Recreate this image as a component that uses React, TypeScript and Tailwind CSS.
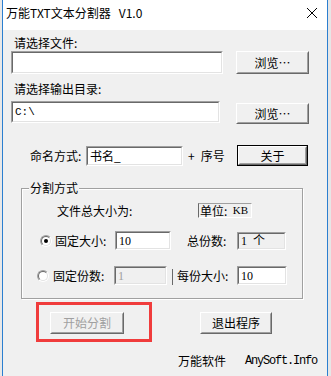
const CJK = "font-['Noto_Sans_CJK_SC','Noto_Sans',sans-serif]"

function Sunken({ className = '', inner = 'bg-white', children }: { className?: string; inner?: string; children?: React.ReactNode }) {
  return (
    <div className={`border border-t-[#a0a0a0] border-l-[#a0a0a0] border-b-white border-r-white ${className}`}>
      <div className={`h-full border border-t-[#696969] border-l-[#696969] border-b-[#e3e3e3] border-r-[#e3e3e3] flex items-center pl-[2px] ${inner}`}>
        {children}
      </div>
    </div>
  )
}

function Button({ className = '', disabled = false, children }: { className?: string; disabled?: boolean; children: React.ReactNode }) {
  return (
    <div className={`border border-t-white border-l-white border-b-[#696969] border-r-[#696969] ${className}`}>
      <div
        className={`h-full flex items-center justify-center border border-t-[#f0f0f0] border-l-[#f0f0f0] border-b-[#a0a0a0] border-r-[#a0a0a0] bg-[#f0f0f0] text-[12px] ${CJK} ${
          disabled ? 'text-[#a0a0a0]' : 'text-black'
        }`}
      >
        {children}
      </div>
    </div>
  )
}

function Radio({ checked, className = '' }: { checked?: boolean; className?: string }) {
  return (
    <div className={`w-[12px] h-[12px] rounded-full border border-t-[#a0a0a0] border-l-[#a0a0a0] border-b-white border-r-white ${className}`}>
      <div className="w-full h-full rounded-full bg-white border border-[#e3e3e3] border-t-[#696969] border-l-[#696969] flex items-center justify-center">
        {checked && <div className="w-[4px] h-[4px] rounded-full bg-black" />}
      </div>
    </div>
  )
}

export default function App() {
  return (
    <div className="w-[331px] h-[376px] flex bg-[#e6e6e6] overflow-hidden">
      <div className="w-[2px] bg-[#e8e8e8]" />
      <div className="w-px bg-[#2b7fd0]" />

      {/* window */}
      <div className={`w-[324px] bg-[#f0f0f0] text-[12px] text-black ${CJK}`}>
        <div className="h-[30px] bg-white flex items-start justify-between">
          <span className="mt-[5px] ml-[3px] leading-[16px] text-[12px]">万能TXT文本分割器&nbsp;&nbsp;&nbsp;V1.0</span>
          <svg width="12" height="12" viewBox="0 0 12 12" className="mt-[7px] mr-[9px]">
            <path d="M1 1 L11 11 M11 1 L1 11" stroke="#000" strokeWidth="1" />
          </svg>
        </div>

        <div className="mt-[6px] ml-[11px] h-[14px] leading-[14px]">请选择文件:</div>
        <div className="mt-[1px] flex">
          <Sunken className="ml-[8px] w-[212px] h-[23px]" />
          <Button className="ml-[13px] w-[73px] h-[23px]">浏览…</Button>
        </div>

        <div className="mt-[8px] ml-[11px] h-[14px] leading-[14px]">请选择输出目录:</div>
        <div className="mt-[5px] flex items-start">
          <Sunken className="ml-[8px] w-[209px] h-[22px]">
            <span className="font-['Liberation_Mono',monospace] text-[11px] leading-none">C:\</span>
          </Sunken>
          <Button className="ml-[16px] mt-[2px] w-[73px] h-[21px]">浏览…</Button>
        </div>

        <div className="mt-[21px] flex items-center">
          <span className="ml-[27px] w-[56px] leading-[14px]">命名方式:</span>
          <Sunken className="w-[97px] h-[20px]">
            <span className="leading-none">书名_</span>
          </Sunken>
          <span className="ml-[5px] w-[49px] leading-[14px]">
            <span className="mr-[6px]">+</span>序号
          </span>
          <div className="border border-black">
            <Button className="w-[69px] h-[19px]">关于</Button>
          </div>
        </div>

        {/* group box */}
        <div className="relative mt-[22px] ml-[18px] w-[282px] h-[111px] border border-[#a0a0a0] shadow-[inset_1px_1px_0_#fff,1px_1px_0_#fff]">
          <span className="absolute top-[-8px] left-[7px] px-[1px] bg-[#f0f0f0] leading-[14px]">分割方式</span>

          <div className="mt-[14px] flex items-center">
            <span className="ml-[35px] w-[141px] leading-[14px]">文件总大小为:</span>
            <div className="w-[54px] h-[15px] border border-t-[#a0a0a0] border-l-[#696969] border-b-white border-r-white flex items-center pl-px leading-[13px]">
              单位:&nbsp;&nbsp;<span className="font-['Liberation_Serif',serif] text-[11px]">KB</span>
            </div>
          </div>

          <div className="mt-[13px] h-[19px] flex items-center">
            <Radio checked className="ml-[18px]" />
            <span className="ml-[3px] w-[60px] leading-[14px]">固定大小:</span>
            <Sunken className="w-[56px] h-[19px]">
              <span className="font-['Liberation_Serif',serif] text-[12px] leading-none">10</span>
            </Sunken>
            <span className="ml-[16px] w-[50px] leading-[14px]">总份数:</span>
            <Sunken className="w-[49px] h-[18px]" inner="bg-[#f0f0f0]">
              <span className="leading-none">
                <span className="font-['Liberation_Serif',serif] mr-[6px]">1</span>个
              </span>
            </Sunken>
          </div>

          <div className="mt-[16px] h-[19px] flex items-center">
            <Radio className="ml-[15px]" />
            <span className="ml-[4px] w-[61px] leading-[14px]">固定份数:</span>
            <Sunken className="w-[53px] h-[19px]" inner="bg-[#f0f0f0]">
              <span className="font-['Liberation_Serif',serif] text-[12px] leading-none text-[#a0a0a0]">1</span>
            </Sunken>
            <div className="ml-[5px] w-px h-[16px] bg-[#696969] mt-[3px]" />
            <span className="ml-[4px] w-[60px] leading-[14px]">每份大小:</span>
            <Sunken className="w-[50px] h-[19px]">
              <span className="font-['Liberation_Serif',serif] text-[12px] leading-none">10</span>
            </Sunken>
          </div>
        </div>

        <div className="mt-[3px] flex items-start">
          <div className="ml-[33px] w-[116px] h-[40px] border-[3px] border-[#f03c3c] pt-[7px] pl-[11px]">
            <Button disabled className="w-[74px] h-[22px]">开始分割</Button>
          </div>
          <Button className="ml-[48px] mt-[10px] w-[72px] h-[22px]">退出程序</Button>
        </div>

        <div className="mt-[12px] flex items-center h-[14px]">
          <span className="ml-[175px] leading-[14px]">万能软件</span>
          <span className="ml-[19px] font-['Liberation_Mono',monospace] text-[12px] tracking-[-1.2px] leading-[14px]">AnySoft.Info</span>
        </div>
      </div>

      <div className="w-px bg-[#2b7fd0]" />
      <div className="flex-1 bg-[#e6e6e6]" />
    </div>
  )
}
